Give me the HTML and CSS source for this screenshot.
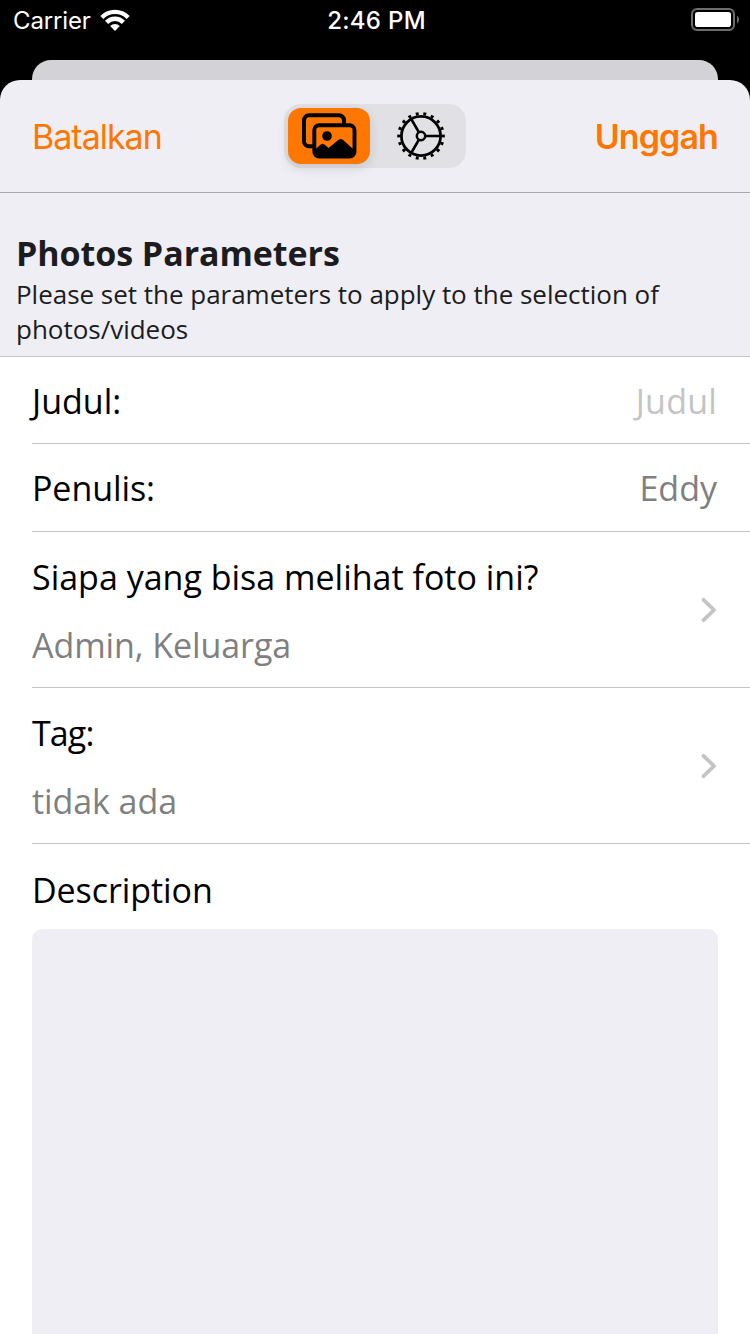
FILE: index.html
```html
<!DOCTYPE html>
<html lang="id">
<head>
<meta charset="utf-8">
<title>Photos Parameters</title>
<link rel="stylesheet" href="styles.css">
</head>
<body>
<div class="screen">
  <div class="status">
    <div class="carrier">
      <span class="carrier-name">Carrier</span>
      <svg class="wifi" width="30" height="23" viewBox="0 0 30 23">
        <path d="M0.3 6.9A20.6 20.6 0 0 1 29.7 6.9L26.7 9.9A16.6 16.6 0 0 0 3.3 9.9Z"/>
        <path d="M5 11.8A13.8 13.8 0 0 1 25 11.8L21.8 15A9.4 9.4 0 0 0 8.2 15Z"/>
        <path d="M10.2 17A6.8 6.8 0 0 1 19.8 17L15 21.9Z"/>
      </svg>
    </div>
    <span class="time">2:46 PM</span>
    <svg class="battery" width="49" height="24" viewBox="0 0 49 24">
      <rect x="1" y="1" width="42" height="21" rx="5" fill="none" stroke="#6d6d6d" stroke-width="2"/>
      <rect x="4" y="4" width="36" height="15" rx="2.8" fill="#fff"/>
      <path d="M46 7.6Q48 9 48 11.5T46 15.4Z" fill="#6d6d6d"/>
    </svg>
  </div>
  <div class="back-card"></div>
  <main class="sheet">
    <nav class="nav">
      <span class="cancel">Batalkan</span>
      <div class="segments">
        <div class="segment selected">
          <svg width="56" height="48" viewBox="0 0 56 48">
            <path d="M11.8 34.2H8.2A4.8 4.8 0 0 1 3 29.5V8.5A5 5 0 0 1 8 3.3H38A5 5 0 0 1 43 8.3V12" fill="none" stroke="#000" stroke-width="4"/>
            <rect x="13.3" y="13.2" width="40.2" height="31.4" rx="4.8" fill="#ff7700" stroke="#000" stroke-width="3.9"/>
            <circle cx="26" cy="24" r="4.8"/>
            <path d="M14 37.5L19.8 32.4Q21.6 31 23.4 32.4L27.6 36L37.6 27.8Q39.7 26.2 41.8 27.8L53 37.8V41A4 4 0 0 1 49 45H18A4 4 0 0 1 14 41Z"/>
          </svg>
        </div>
        <div class="segment">
          <svg width="50" height="50" viewBox="-25 -25 50 50" fill="none" stroke="#000">
            <circle r="22.3" stroke-width="3" pathLength="180" stroke-dasharray="3.8 6.2" stroke-dashoffset="1.9"/>
            <circle r="19.6" stroke-width="2.8"/>
            <circle r="4.2" stroke-width="2.5"/>
            <path d="M5 0H20M-2.5 -4.33L-10 -17.32M-2.5 4.33L-10 17.32" stroke-width="2.7"/>
          </svg>
        </div>
      </div>
      <span class="upload">Unggah</span>
    </nav>
    <header class="intro">
      <h1 class="title">Photos Parameters</h1>
      <p class="subtitle">Please set the parameters to apply to the selection of photos/videos</p>
    </header>
    <section class="rows">
      <div class="row"><span>Judul:</span><span class="placeholder">Judul</span></div>
      <div class="row author"><span class="label-author">Penulis:</span><span class="value">Eddy</span></div>
      <div class="row tall">
        <div class="stack"><span>Siapa yang bisa melihat foto ini?</span><span class="detail">Admin, Keluarga</span></div>
        <svg class="chevron" width="16" height="26" viewBox="0 0 16 26"><path d="M2.5 2.8L13 13L2.5 23.2"/></svg>
      </div>
      <div class="row tall">
        <div class="stack"><span class="label-tag">Tag:</span><span class="detail tags">tidak ada</span></div>
        <svg class="chevron" width="16" height="26" viewBox="0 0 16 26"><path d="M2.5 2.8L13 13L2.5 23.2"/></svg>
      </div>
      <div class="description">
        <span class="label-description">Description</span>
        <div class="textarea"></div>
      </div>
    </section>
  </main>
</div>
</body>
</html>
```
FILE: styles.css
```css
* { box-sizing: border-box; }
body { margin: 0; background: #000; }
.screen {
  width: 750px;
  height: 1334px;
  overflow: hidden;
  display: flex;
  flex-direction: column;
  background: #000;
  font-family: "Open Sans", sans-serif;
  font-size: 34px;
  line-height: 46px;
  color: #000;
  white-space: nowrap;
}
.status {
  height: 60px;
  flex: none;
  display: grid;
  grid-template-columns: 1fr auto 1fr;
  padding: 5px 10px 0 13px;
  color: #fff;
  font-family: Inter, sans-serif;
  font-size: 24px;
  line-height: 32px;
}
.carrier { display: flex; gap: 9px; }
.carrier-name { letter-spacing: -0.15px; }
.wifi { margin-top: 4px; fill: #fff; }
.time { font-weight: 500; letter-spacing: 0.3px; }
.battery { justify-self: end; margin-top: 3px; }
.back-card {
  height: 20px;
  flex: none;
  margin: 0 32px;
  background: #d3d2d7;
  border-radius: 19px 19px 0 0;
}
.sheet {
  flex: 1;
  display: flex;
  flex-direction: column;
  background: #efeef4;
  border-radius: 20px 20px 0 0;
  overflow: hidden;
}
.nav {
  height: 113px;
  flex: none;
  display: grid;
  grid-template-columns: 1fr auto 1fr;
  align-items: center;
  padding: 0 32px;
  border-bottom: 1px solid #a8a7ac;
  color: #ff7700;
  font-family: Inter, sans-serif;
  font-size: 34px;
}
.cancel { padding-top: 1px; letter-spacing: -1px; }
.upload { justify-self: end; padding-top: 1px; font-weight: 600; letter-spacing: -0.9px; }
.segments {
  width: 182px;
  height: 64px;
  display: flex;
  gap: 10px;
  padding: 4px;
  border-radius: 17px;
  background: #e1e0e5;
}
.segment {
  width: 82px;
  height: 56px;
  display: flex;
  align-items: center;
  justify-content: center;
  border-radius: 13px;
}
.selected { background: #ff7700; box-shadow: 0 4px 12px rgba(0, 0, 0, 0.12); }
.intro {
  height: 164px;
  flex: none;
  padding: 36px 16px 0;
  border-bottom: 1px solid #c4c3c7;
  color: #1c1c1e;
}
.title { margin: 0; font-size: 34px; line-height: 48px; font-weight: 700; letter-spacing: -0.06px; }
.subtitle { margin: 0; font-size: 26px; line-height: 35px; letter-spacing: -0.02px; white-space: normal; }
.rows { flex: 1; background: #fff; padding-left: 32px; }
.row {
  height: 87px;
  display: flex;
  align-items: center;
  justify-content: space-between;
  padding: 1px 33px 0 0;
  border-bottom: 1px solid #c4c4c6;
}
.author { height: 88px; }
.tall { height: 156px; padding-top: 0; }
.stack { display: flex; flex-direction: column; gap: 22px; padding-top: 3px; }
.placeholder { color: #c4c4c4; letter-spacing: 0.2px; }
.value, .detail { color: #808080; }
.detail, .label-author { letter-spacing: -0.08px; }
.label-tag { letter-spacing: -0.9px; }
.chevron { fill: none; stroke: #c4c4c6; stroke-width: 3.8; stroke-linecap: round; stroke-linejoin: round; }
.description { display: flex; flex-direction: column; gap: 16px; padding: 23px 32px 0 0; }
.label-description { letter-spacing: -0.08px; }
.textarea { height: 420px; border-radius: 10px; background: #efeef4; }
```
